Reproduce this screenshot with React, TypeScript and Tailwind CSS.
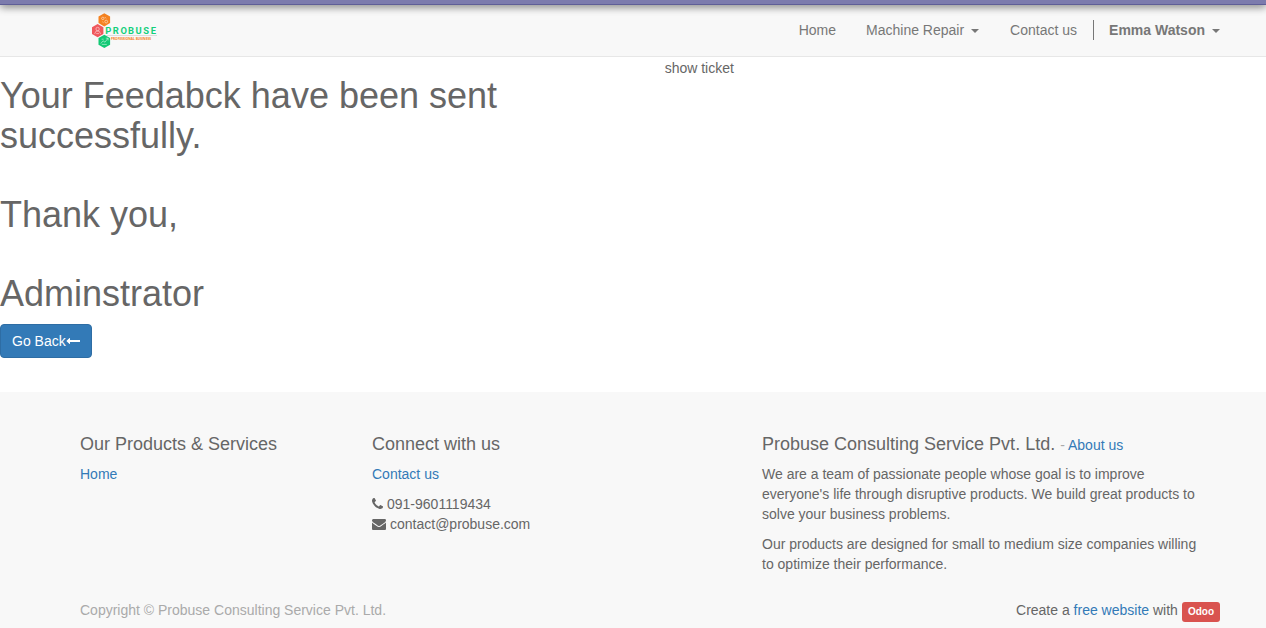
import React from "react";

const hexagons = [
  { x: 12.3, y: 6.8, fill: "#f58220" },
  { x: 5.6, y: 17.6, fill: "#f0585c" },
  { x: 12.3, y: 28.4, fill: "#12c975" },
];

function Logo() {
  return (
    <svg viewBox="0 0 66 36" className="h-9 w-[66px]" role="img" aria-label="Probuse">
      {hexagons.map((h) => (
        <path
          key={h.fill}
          fill={h.fill}
          transform={`translate(${h.x} ${h.y})`}
          d="M0-6.6 5.8-3.3V3.3L0 6.6-5.8 3.3V-3.3Z"
        />
      ))}
      <g fill="none" stroke="#fff" strokeOpacity="0.6" strokeWidth="0.8">
        <circle cx="10.8" cy="5.4" r="1.2" />
        <circle cx="14.2" cy="8.6" r="1.4" />
        <path d="M12.8 4l1.2 1.4M10.4 8.8l1.2 1" />
        <circle cx="5.6" cy="16" r="1.7" />
        <path d="M2.6 20.9l1.5-2.8h3l1.5 2.8M4.2 20.6h2.8" />
        <path d="M8.8 30.6l2.2-2.8 2 1.4 3-4M13.8 25.2h2.3v2.3M9.8 31.4h5M9.6 26.2h2" />
      </g>
      <text y="20.6" fontSize="9.4" fontWeight="700" fill="#14d07c" fontFamily="Roboto, sans-serif">
        {"PROBUSE".split("").map((c, i) => (
          <tspan key={i} x={13.2 + i * 7.6}>
            {c}
          </tspan>
        ))}
      </text>
      <path d="M14 22.5H65" stroke="#dcdcdc" />
      <text x="19" y="27" fontSize="3.2" fontWeight="700" fill="#f58220" fontFamily="'Open Sans', sans-serif">
        PROFESSIONAL BUSINESS
      </text>
    </svg>
  );
}

function Caret() {
  return (
    <svg viewBox="0 0 8 4" className="ml-[7px] inline-block h-1 w-2 align-middle" fill="currentColor" aria-hidden="true">
      <path d="M0 0H8L4 4Z" />
    </svg>
  );
}

function PhoneIcon() {
  return (
    <svg viewBox="0 0 1408 1792" className="h-3.5 w-[11px]" fill="currentColor" aria-hidden="true">
      <path d="M1408 1240q0 27-10 70.5t-21 68.5q-21 50-122 106-94 51-186 51-27 0-53-3.5t-57.5-12.5-47-14.5-55.5-20.5-49-18q-98-35-175-83-127-79-264-216t-216-264q-48-77-83-175-3-9-18-49t-20.5-55.5-14.5-47-12.5-57.5-3.5-53q0-92 51-186 56-101 106-122 25-11 68.5-21t70.5-10q14 0 21 3 18 6 53 76 11 19 30 54t35 63.5 31 53.5q3 4 17.5 25t21.5 35.5 7 28.5q0 20-28.5 50t-62 55-62 53-28.5 46q0 9 5 22.5t8.5 20.5 14 24 11.5 19q76 137 174 235t235 174q2 1 19 11.5t24 14 20.5 8.5 22.5 5q18 0 46-28.5t53-62 55-62 50-28.5q14 0 28.5 7t35.5 21.5 25 17.5q25 15 53.5 31t63.5 35 54 30q70 35 76 53 3 7 3 21z" />
    </svg>
  );
}

function EnvelopeIcon() {
  return (
    <svg viewBox="0 0 1792 1792" className="size-3.5" fill="currentColor" aria-hidden="true">
      <path d="M1792 710v794q0 66-47 113t-113 47h-1472q-66 0-113-47t-47-113v-794q44 49 101 87 362 246 497 345 57 42 92.5 65.5t94.5 48 110 24.5h2q51 0 110-24.5t94.5-48 92.5-65.5q170-123 498-345 57-39 100-87zm0-294q0 79-49 151t-122 123q-376 261-468 325-10 7-42.5 31t-54 38.5-52 32.5-57.5 27-50 9h-2q-23 0-50-9t-57.5-27-52-32.5-54-38.5-42.5-31q-91-64-262-182.5t-205-142.5q-62-42-117-115.5t-55-136.5q0-78 41.5-130t118.5-52h1472q65 0 112.5 47t47.5 113z" />
    </svg>
  );
}

function LongArrowLeftIcon() {
  return (
    <svg viewBox="0 0 1792 1792" className="size-3.5" fill="currentColor" aria-hidden="true">
      <path d="M1792 800v192q0 14-9 23t-23 9h-1248v224q0 21-19 29t-35-5l-384-350q-10-10-10-23 0-14 10-24l384-354q16-14 35-6 19 9 19 29v224h1248q14 0 23 9t9 23z" />
    </svg>
  );
}

function Header() {
  return (
    <header>
      <div className="relative h-[5px] border-b border-[#5f5e97] bg-[#7c7bad] shadow-[0_1px_8px_rgba(0,0,0,0.75)]" />
      <nav className="flex h-[52px] items-center justify-between border-b border-[#e7e7e7] bg-[#f8f8f8] pr-[46px] pl-[92px] text-[#777]">
        <a href="#home">
          <Logo />
        </a>
        <ul className="flex items-center pb-0.5">
          <li className="px-[15px]">
            <a href="#home">Home</a>
          </li>
          <li className="px-[15px]">
            <button type="button">
              Machine Repair
              <Caret />
            </button>
          </li>
          <li className="px-4">
            <a href="#contact">Contact us</a>
          </li>
          <li className="border-l border-[#777] pl-[15px]">
            <button type="button" className="font-bold">
              Emma Watson
              <Caret />
            </button>
          </li>
        </ul>
      </nav>
    </header>
  );
}

function Footer() {
  const heading = "mb-2.5 text-lg leading-5";
  return (
    <footer className="grow bg-[#f8f8f8] pt-[42px] pr-[46px] pl-20">
      <div className="flex">
        <section className="w-[292px] shrink-0">
          <h4 className={heading}>Our Products &amp; Services</h4>
          <a href="#home" className="text-[#337ab7]">
            Home
          </a>
        </section>
        <section className="w-[390px] shrink-0">
          <h4 className={heading}>Connect with us</h4>
          <a href="#contact" className="text-[#337ab7]">
            Contact us
          </a>
          <ul className="mt-2.5">
            <li className="flex items-center gap-1">
              <PhoneIcon />
              091-9601119434
            </li>
            <li className="flex items-center gap-1">
              <EnvelopeIcon />
              contact@probuse.com
            </li>
          </ul>
        </section>
        <section className="min-w-0 grow pr-3">
          <h4 className={heading}>
            Probuse Consulting Service Pvt. Ltd.{" "}
            <small className="text-sm leading-none text-[#aaa]">
              -{" "}
              <a href="#about" className="text-[#337ab7]">
                About us
              </a>
            </small>
          </h4>
          <p className="mb-2.5">
            We are a team of passionate people whose goal is to improve everyone's life through disruptive products. We
            build great products to solve your business problems.
          </p>
          <p>Our products are designed for small to medium size companies willing to optimize their performance.</p>
        </section>
      </div>
      <div className="flex items-start justify-between pt-[26px]">
        <p className="text-[#aaa]">Copyright © Probuse Consulting Service Pvt. Ltd.</p>
        <p className="flex items-start">
          <span>
            Create a{" "}
            <a href="#website" className="text-[#337ab7]">
              free website
            </a>{" "}
            with
          </span>
          <a
            href="#odoo"
            className="mt-0.5 ml-1 rounded-[3px] bg-[#d9534f] px-1.5 text-[10px] leading-5 font-bold text-white"
          >
            Odoo
          </a>
        </p>
      </div>
    </footer>
  );
}

export default function App() {
  return (
    <div className="flex min-h-screen flex-col bg-white font-['Liberation_Sans',Arial,sans-serif] text-sm leading-5 text-[#666]">
      <Header />
      <main className="flex pb-[34px]">
        <div className="w-[52.5%] pt-[19px] pr-[30px]">
          <h1 className="mb-2.5 flex flex-col gap-[39px] text-4xl leading-10">
            <span>Your Feedabck have been sent successfully.</span>
            <span>Thank you,</span>
            <span>Adminstrator</span>
          </h1>
          <button
            type="button"
            className="flex items-center rounded border border-[#2e6da4] bg-[#337ab7] px-[11px] py-1.5 text-white"
          >
            Go Back
            <LongArrowLeftIcon />
          </button>
        </div>
        <p className="pt-px">show ticket</p>
      </main>
      <Footer />
    </div>
  );
}
